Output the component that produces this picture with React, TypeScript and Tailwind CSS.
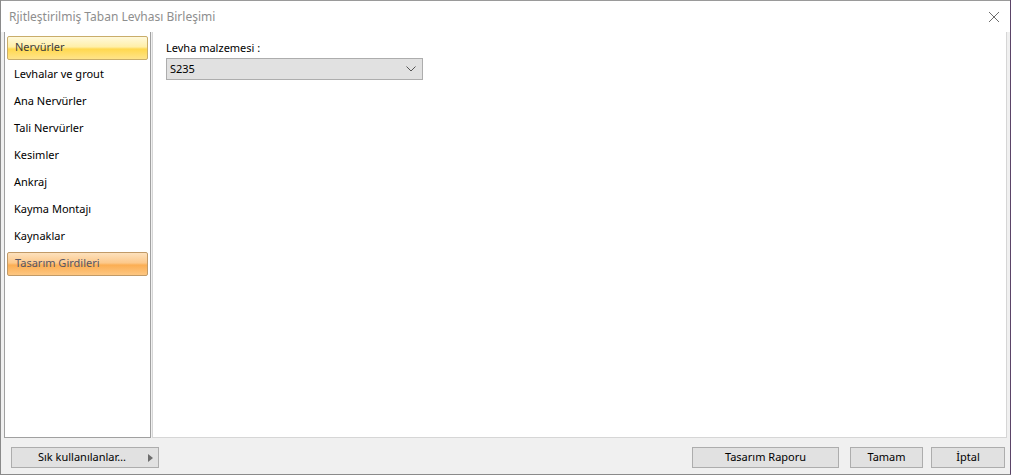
import React from 'react';

const items = [
  'Nervürler',
  'Levhalar ve grout',
  'Ana Nervürler',
  'Tali Nervürler',
  'Kesimler',
  'Ankraj',
  'Kayma Montajı',
  'Kaynaklar',
  'Tasarım Girdileri',
];

const btn =
  'h-[21px] border border-[#adadad] bg-[#e1e1e1] text-[11px] text-black flex items-center justify-center';

export default function App() {
  return (
    <div
      className="w-[1011px] h-[475px] flex flex-col bg-white border-l border-b border-r border-[#8a8a8a] border-r-[#5b4468] overflow-hidden"
      style={{ fontFamily: '"Noto Sans", "Open Sans", sans-serif' }}
    >
      {/* Title bar */}
      <div className="h-[32px] flex items-center justify-between pl-[8px] pr-[10px] bg-white border-t border-[#9a9a9a]">
        <span className="text-[12px] text-[#8e8e8e]">Rjitleştirilmiş Taban Levhası Birleşimi</span>
        <svg width="12" height="12" viewBox="0 0 12 12">
          <path d="M1 1 L11 11 M11 1 L1 11" stroke="#6d6d6d" strokeWidth="1" />
        </svg>
      </div>

      <div className="flex-1 flex flex-col bg-[#f0f0f0]">
        <div className="flex-1 flex pl-[3px] pr-[3px] gap-[1px]">
          {/* Left navigation list */}
          <div className="w-[147px] bg-white border border-[#a0a0a0] border-t-0 px-[2px] pt-[2px]">
            {items.map((it, i) => {
              const first = i === 0;
              const last = i === items.length - 1;
              return (
                <div key={it} className="h-[27px] flex items-center">
                  {first ? (
                    <div className="h-[24px] w-full flex items-center pl-[7px] rounded-[2px] border border-[#c9ad6a] bg-[linear-gradient(to_bottom,#fff9dc_0%,#ffefa8_45%,#ffd84f_55%,#ffe48a_100%)] text-[11px] text-[#3b3b3b]">
                      {it}
                    </div>
                  ) : last ? (
                    <div className="h-[24px] w-full flex items-center pl-[7px] rounded-[2px] border border-[#c19a67] bg-[linear-gradient(to_bottom,#fde1bd_0%,#fcc98b_45%,#fbae53_55%,#fdc782_100%)] text-[11px] text-[#555566]">
                      {it}
                    </div>
                  ) : (
                    <span className="pl-[7px] text-[11px] text-black">{it}</span>
                  )}
                </div>
              );
            })}
          </div>

          {/* Content panel */}
          <div className="flex-1 bg-white border-l border-[#d6d6d6] border-r border-b pl-[13px] pt-[8px]">
            <div className="text-[11px] text-black leading-[16px]">Levha malzemesi :</div>
            <div className="mt-[2px] w-[257px] h-[22px] border border-[#adadad] bg-[#e1e1e1] flex items-center justify-between pl-[3px] pr-[6px]">
              <span className="text-[11px] text-black">S235</span>
              <svg width="10" height="6" viewBox="0 0 10 6">
                <path d="M0.5 0.5 L5 5 L9.5 0.5" fill="none" stroke="#555" strokeWidth="1" />
              </svg>
            </div>
          </div>
        </div>

        {/* Footer */}
        <div className="h-[36px] flex items-start pt-[9px] pl-[10px] pr-[5px]">
          <div className={`${btn} w-[148px] relative`}>
            <span className="pr-[6px]">Sık kullanılanlar…</span>
            <svg width="5" height="8" viewBox="0 0 5 8" className="absolute right-[5px] top-[6px]">
              <path d="M0 0 L5 4 L0 8 Z" fill="#6d6d6d" />
            </svg>
          </div>
          <div className="flex-1" />
          <div className={`${btn} w-[147px]`}>Tasarım Raporu</div>
          <div className={`${btn} w-[73px] ml-[11px]`}>Tamam</div>
          <div className={`${btn} w-[74px] ml-[8px]`}>İptal</div>
        </div>
      </div>
    </div>
  );
}
